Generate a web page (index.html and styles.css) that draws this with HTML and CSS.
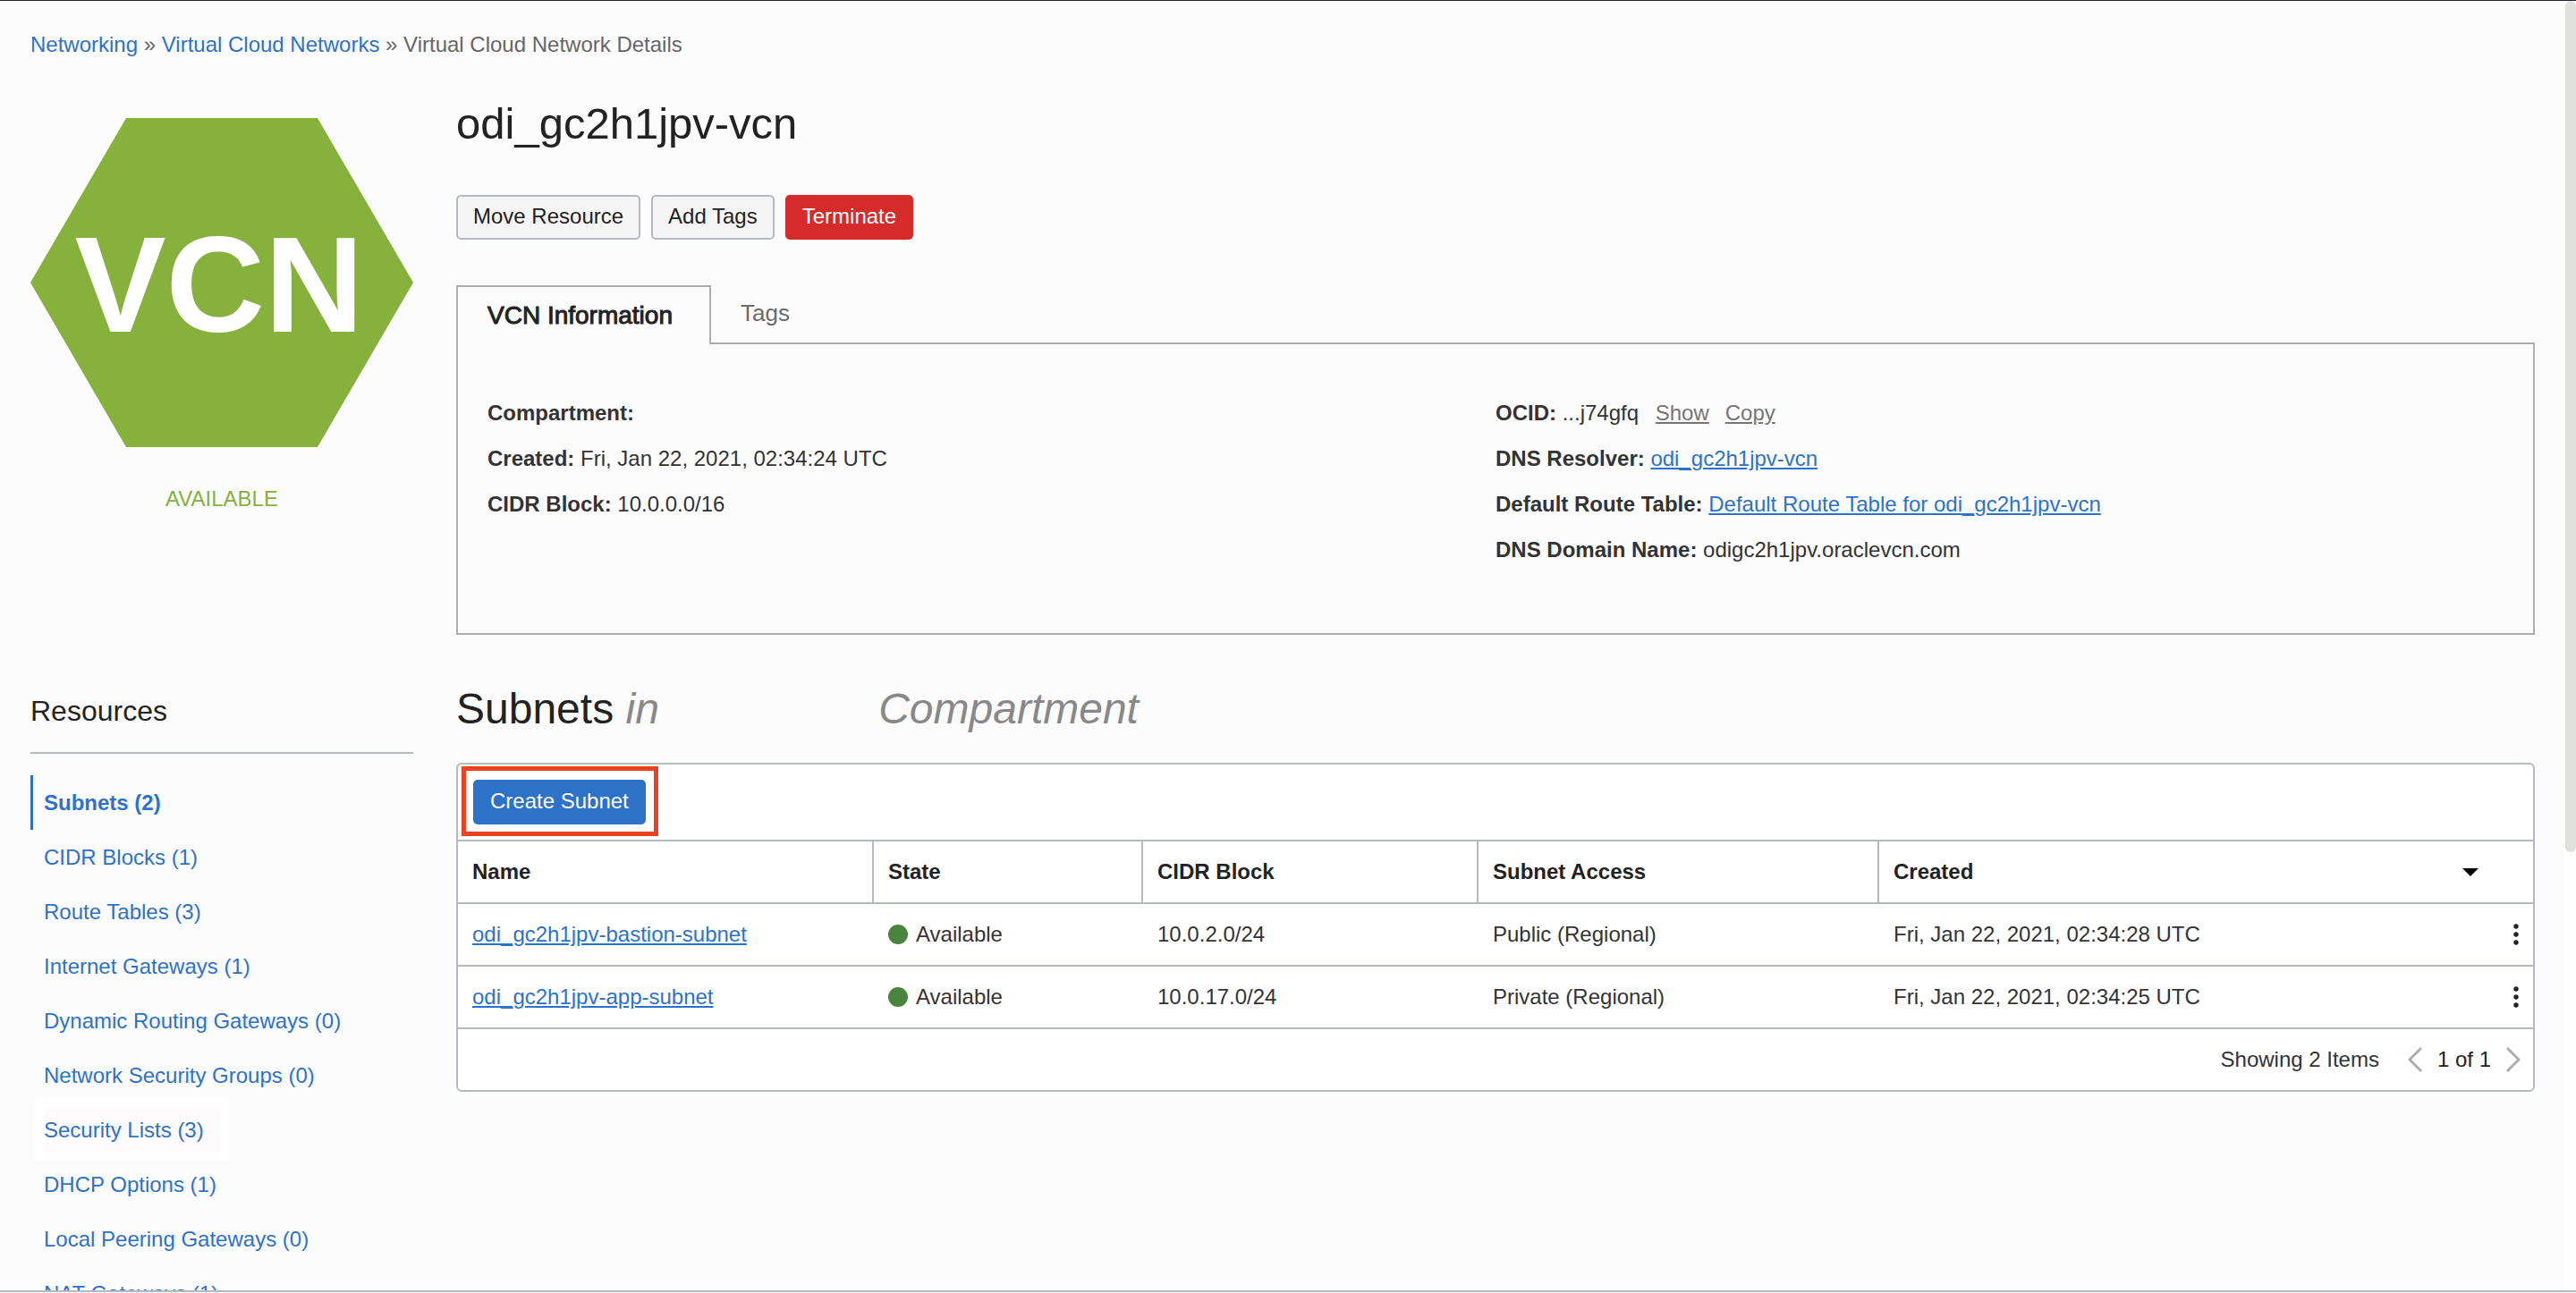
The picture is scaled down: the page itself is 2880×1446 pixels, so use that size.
FILE: index.html
```html
<!DOCTYPE html>
<html lang="en">
<head>
<meta charset="utf-8">
<title>Virtual Cloud Network Details</title>
<link rel="stylesheet" href="styles.css">
</head>
<body>
<div class="viewport">
  <div class="page">
    <nav class="breadcrumb" aria-label="Breadcrumb"><a href="#">Networking</a> » <a href="#">Virtual Cloud Networks</a> » <span>Virtual Cloud Network Details</span></nav>
    <div class="layout">
      <div class="status">
        <svg class="hexagon" viewBox="0 0 428 368" role="img" aria-label="VCN">
          <polygon points="107,0 321,0 428,184 321,368 107,368 0,184" fill="#85b13c"/>
          <text class="hexagon-label" x="211" y="239" text-anchor="middle">VCN</text>
        </svg>
        <p class="status-text">AVAILABLE</p>
      </div>

      <main class="details">
        <h1 class="title">odi_gc2h1jpv-vcn</h1>
        <div class="actions">
          <button class="btn" type="button">Move Resource</button>
          <button class="btn" type="button">Add Tags</button>
          <button class="btn btn-danger" type="button">Terminate</button>
        </div>
        <div class="tabs" role="tablist">
          <button class="tab tab-active" type="button" role="tab" aria-selected="true">VCN Information</button>
          <button class="tab" type="button" role="tab" aria-selected="false">Tags</button>
        </div>
        <div class="panel" role="tabpanel">
          <div class="facts">
            <p><b>Compartment:</b></p>
            <p><b>Created:</b> Fri, Jan 22, 2021, 02:34:24 UTC</p>
            <p><b>CIDR Block:</b> 10.0.0.0/16</p>
          </div>
          <div class="facts">
            <p><b>OCID:</b> ...j74gfq <a class="muted-link" href="#">Show</a><a class="muted-link" href="#">Copy</a></p>
            <p><b>DNS Resolver:</b> <a class="text-link" href="#">odi_gc2h1jpv-vcn</a></p>
            <p><b>Default Route Table:</b> <a class="text-link" href="#">Default Route Table for odi_gc2h1jpv-vcn</a></p>
            <p><b>DNS Domain Name:</b> odigc2h1jpv.oraclevcn.com</p>
          </div>
        </div>
      </main>

      <aside class="resources">
        <h2 class="resources-title">Resources</h2>
        <ul class="resource-list">
          <li class="current"><a href="#">Subnets (2)</a></li>
          <li><a href="#">CIDR Blocks (1)</a></li>
          <li><a href="#">Route Tables (3)</a></li>
          <li><a href="#">Internet Gateways (1)</a></li>
          <li><a href="#">Dynamic Routing Gateways (0)</a></li>
          <li><a href="#">Network Security Groups (0)</a></li>
          <li><a class="highlighted" href="#">Security Lists (3)</a></li>
          <li><a href="#">DHCP Options (1)</a></li>
          <li><a href="#">Local Peering Gateways (0)</a></li>
          <li><a href="#">NAT Gateways (1)</a></li>
        </ul>
      </aside>

      <section class="subnets">
        <h2 class="subnets-title">Subnets <i>in</i> <i class="scope">Compartment</i></h2>
        <div class="card">
          <div class="toolbar">
            <span class="callout"><button class="btn btn-primary" type="button">Create Subnet</button></span>
          </div>
          <table class="grid">
            <colgroup><col class="col-name"><col class="col-state"><col class="col-cidr"><col class="col-access"><col></colgroup>
            <thead>
              <tr>
                <th>Name</th>
                <th>State</th>
                <th>CIDR Block</th>
                <th>Subnet Access</th>
                <th><div class="cell sort-cell">Created
                  <button class="icon-btn" type="button" aria-label="Sort by created"><svg width="18" height="9" viewBox="0 0 18 9"><path d="M0 0H18L9 9Z" fill="#000"/></svg></button></div></th>
              </tr>
            </thead>
            <tbody>
              <tr>
                <td><a class="text-link" href="#">odi_gc2h1jpv-bastion-subnet</a></td>
                <td><span class="state">Available</span></td>
                <td>10.0.2.0/24</td>
                <td>Public (Regional)</td>
                <td><div class="cell">Fri, Jan 22, 2021, 02:34:28 UTC
                  <button class="icon-btn" type="button" aria-label="Actions"><svg width="6" height="24" viewBox="0 0 6 24" fill="#222"><circle cx="3" cy="3" r="2.7"/><circle cx="3" cy="12" r="2.7"/><circle cx="3" cy="21" r="2.7"/></svg></button></div></td>
              </tr>
              <tr>
                <td><a class="text-link" href="#">odi_gc2h1jpv-app-subnet</a></td>
                <td><span class="state">Available</span></td>
                <td>10.0.17.0/24</td>
                <td>Private (Regional)</td>
                <td><div class="cell">Fri, Jan 22, 2021, 02:34:25 UTC
                  <button class="icon-btn" type="button" aria-label="Actions"><svg width="6" height="24" viewBox="0 0 6 24" fill="#222"><circle cx="3" cy="3" r="2.7"/><circle cx="3" cy="12" r="2.7"/><circle cx="3" cy="21" r="2.7"/></svg></button></div></td>
              </tr>
            </tbody>
          </table>
          <div class="pager">
            <span class="pager-count">Showing 2 Items</span>
            <button class="icon-btn" type="button" aria-label="Previous page"><svg width="16" height="28" viewBox="0 0 16 28"><path d="M15 1L2 14L15 27" fill="none" stroke="#adadad" stroke-width="3"/></svg></button>
            <span class="pager-page">1 of 1</span>
            <button class="icon-btn" type="button" aria-label="Next page"><svg width="16" height="28" viewBox="0 0 16 28"><path d="M1 1L14 14L1 27" fill="none" stroke="#adadad" stroke-width="3"/></svg></button>
          </div>
        </div>
      </section>
    </div>
  </div>
  <div class="scroll-track"><div class="scroll-thumb"></div></div>
</div>
</body>
</html>
```
FILE: styles.css
```css
* {
  box-sizing: border-box;
}

body {
  margin: 0;
  height: 100vh;
  padding-bottom: 1px;
  overflow: hidden;
  background: #fcfcfc;
  color: #333;
  font: 24px/28px "Liberation Sans", Arial, sans-serif;
}

h1, h2, p, ul {
  margin: 0;
  padding: 0;
}

a {
  color: #2d72c9;
  text-decoration: none;
}

button {
  font: inherit;
  color: inherit;
  cursor: pointer;
}

.viewport {
  display: flex;
  height: 100%;
  overflow: hidden;
  border-top: 1px solid #222430;
  border-bottom: 2px solid #b5b9c1;
}

.page {
  flex: 1;
  min-width: 0;
  padding: 35px 33px 0 34px;
}

.scroll-track {
  width: 13px;
  padding-left: 1px;
  background: #fefefe;
}

.scroll-thumb {
  height: 66%;
  border-radius: 6px;
  background: #e0e0df;
}

.breadcrumb {
  color: #666;
}

.layout {
  display: grid;
  grid-template-columns: 428px minmax(0, 1fr);
  column-gap: 48px;
}

/* Status badge */
.status {
  padding-top: 68px;
  text-align: center;
}

.hexagon {
  display: block;
  width: 100%;
}

.hexagon-label {
  font-size: 153px;
  font-weight: bold;
  fill: #fff;
}

.status-text {
  margin-top: 44px;
  color: #85b13c;
}

/* Details */
.details {
  padding-top: 46px;
}

.title {
  color: #222;
  font-size: 49px;
  font-weight: normal;
  line-height: 56px;
}

.actions {
  display: flex;
  gap: 12px;
  margin-top: 52px;
}

.btn {
  display: block;
  height: 50px;
  padding: 0 17px 2px;
  border: 2px solid #b5b9c1;
  border-radius: 5px;
  background: #f5f5f5;
  color: #222;
}

.btn-danger {
  border-color: #d52b2b;
  background: #d52b2b;
  color: #fff;
}

.btn-primary {
  border-color: #2d72c9;
  background: #2d72c9;
  color: #fff;
}

.tabs {
  display: flex;
  margin-top: 51px;
}

.tab {
  height: 64px;
  padding: 0 33px 2px;
  border: 0;
  background: none;
  color: #6b6b6b;
  font-size: 26px;
}

.tab-active {
  position: relative;
  min-width: 285px;
  height: 66px;
  margin-bottom: -2px;
  padding: 0 33px;
  border: 2px solid #adadad;
  border-bottom: 0;
  background: #fcfcfc;
  color: #222;
  font-size: 28px;
  text-align: left;
  -webkit-text-stroke: 1px #222;
}

.panel {
  display: grid;
  grid-template-columns: 1fr 1fr;
  padding: 51px 33px 68px;
  border: 2px solid #adadad;
}

.facts {
  line-height: 51px;
}

.text-link,
.muted-link {
  text-decoration: underline;
}

.muted-link {
  margin-left: 12px;
  color: #757575;
}

.muted-link + .muted-link {
  margin-left: 18px;
}

/* Resource navigation */
.resources {
  padding-top: 65px;
}

.resources-title {
  padding-bottom: 26px;
  border-bottom: 2px solid #b5b9c1;
  color: #222;
  font-size: 32px;
  font-weight: normal;
  line-height: 40px;
}

.resource-list {
  margin-top: 24px;
  list-style: none;
}

.resource-list li {
  padding-left: 12px;
  border-left: 3px solid transparent;
  line-height: 61px;
}

.resource-list .current {
  border-color: #2d72c9;
  font-weight: bold;
}

.highlighted {
  display: inline-block;
  padding-right: 18px;
  background: #fdfbfb;
  box-shadow: 0 0 0 10px #fff;
  line-height: 51px;
}

/* Subnets */
.subnets {
  padding-top: 55px;
}

.subnets-title {
  color: #222;
  font-size: 48px;
  font-weight: normal;
  line-height: 56px;
}

.subnets-title i {
  color: #888;
}

.subnets-title .scope {
  margin-left: 232px;
}

.card {
  margin-top: 32px;
  border: 2px solid #b5b9c1;
  border-radius: 6px;
  background: #fff;
}

.toolbar {
  display: flex;
  padding: 17px;
}

.callout {
  position: relative;
}

.callout::after {
  content: "";
  position: absolute;
  inset: -15px -14px -13px -13px;
  border: 5px solid #ee4023;
  pointer-events: none;
}

.grid {
  width: 100%;
  table-layout: fixed;
  border-spacing: 0;
}

.col-name { width: 465px; }
.col-state { width: 301px; }
.col-cidr { width: 375px; }
.col-access { width: 448px; }

.grid th,
.grid td {
  height: 70px;
  padding: 0 16px;
  border-top: 2px solid #b5b9c1;
  text-align: left;
}

.grid th {
  color: #222;
}

.grid th:not(:last-child) {
  border-right: 2px solid #b5b9c1;
}

.cell {
  display: flex;
  align-items: center;
  justify-content: space-between;
}

.sort-cell {
  padding-right: 45px;
}

.state {
  display: flex;
  align-items: center;
  gap: 9px;
}

.state::before {
  content: "";
  width: 22px;
  height: 22px;
  border-radius: 50%;
  background: #4a8540;
}

.icon-btn {
  display: flex;
  padding: 0;
  border: 0;
  background: none;
}

.pager {
  display: flex;
  align-items: center;
  justify-content: flex-end;
  height: 70px;
  padding-right: 14px;
  border-top: 2px solid #b5b9c1;
}

.pager-count {
  margin-right: 32px;
}

.pager-page {
  margin: 0 17px;
  color: #222;
}
```
